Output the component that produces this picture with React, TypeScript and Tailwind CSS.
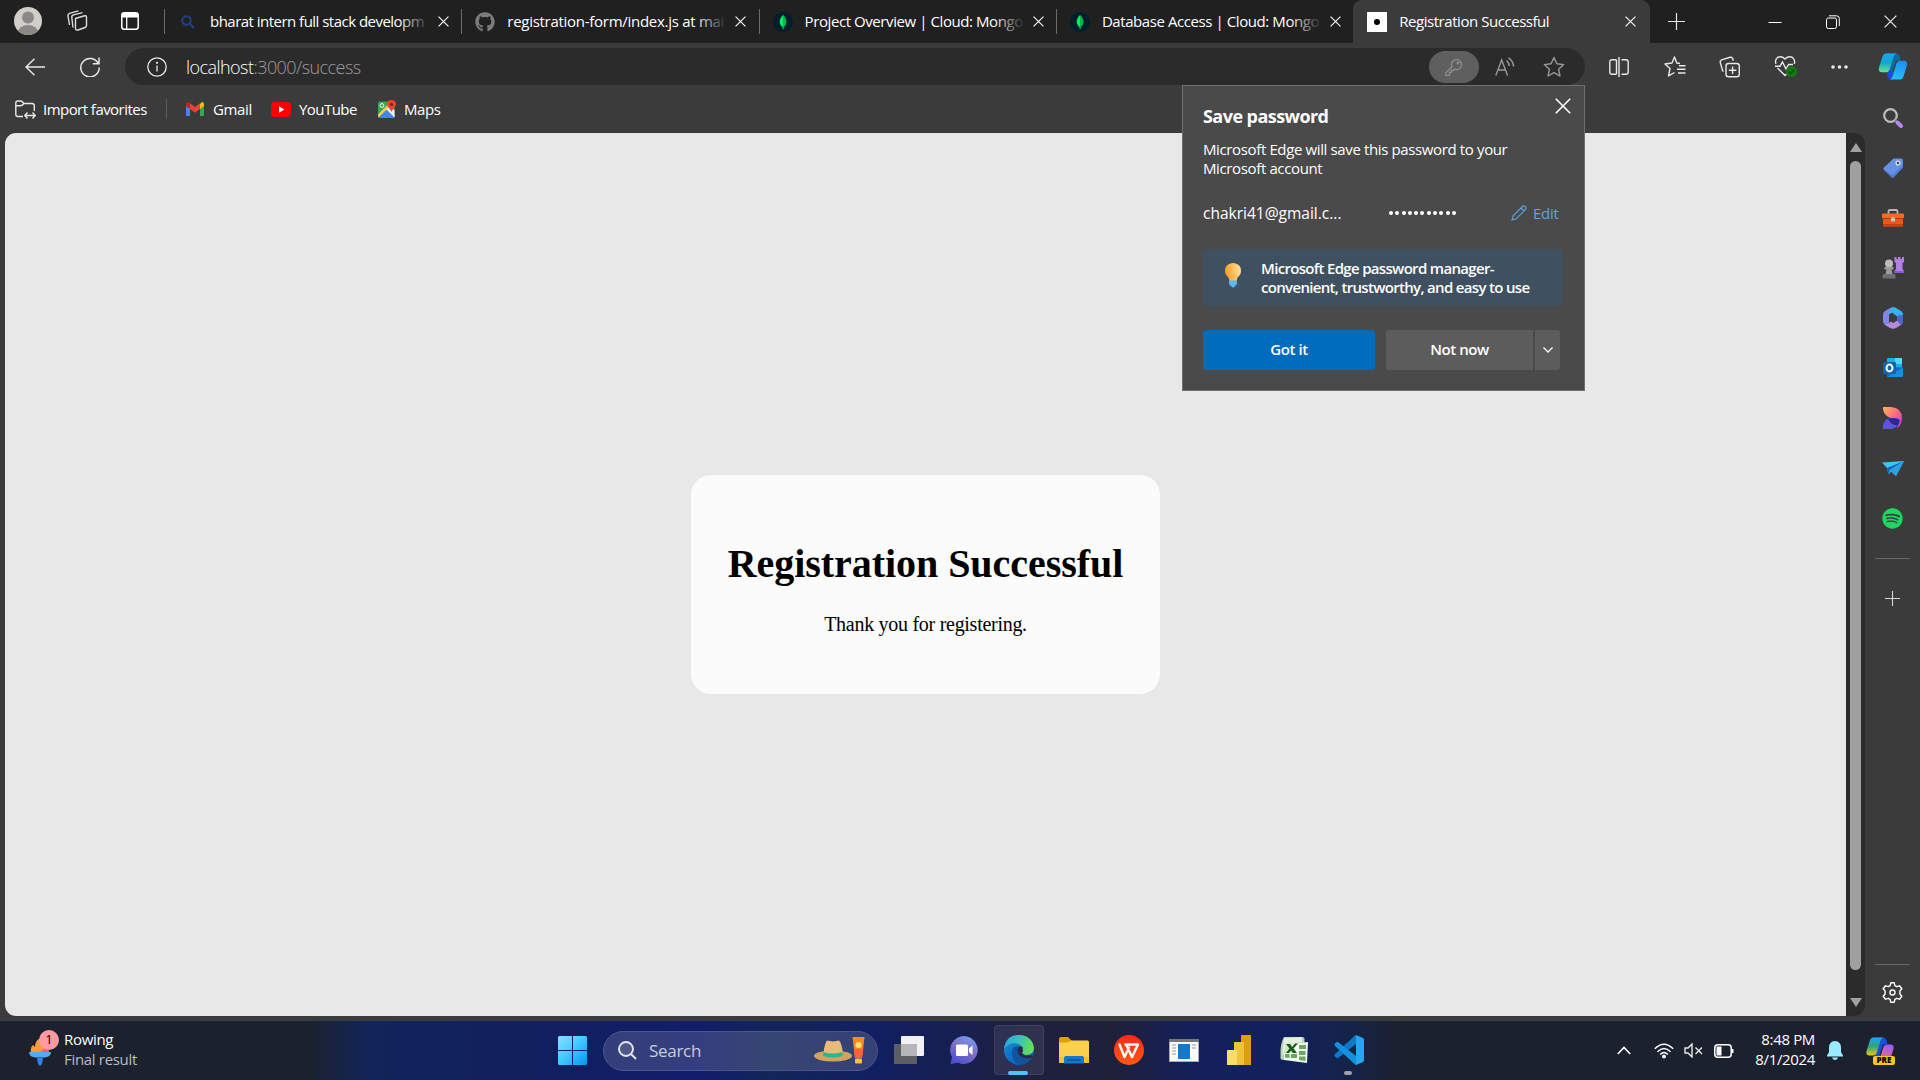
import React from "react";
import { FaGithub, FaSpotify } from "react-icons/fa";

type SvgProps = { className?: string };

const CloseX = ({ className = "" }: SvgProps) => (
  <svg className={className} viewBox="0 0 10 10" fill="none" stroke="currentColor">
    <path d="M0.5 0.5L9.5 9.5M9.5 0.5L0.5 9.5" />
  </svg>
);

const SearchBlue = () => (
  <svg className="h-[14px] w-[14px]" viewBox="0 0 14 14" fill="none" stroke="#1d4189" strokeWidth="2">
    <circle cx="5.5" cy="5.5" r="4.2" />
    <path d="M8.6 8.6L13 13" />
  </svg>
);

const Mongo = () => (
  <svg className="h-5 w-5" viewBox="0 0 20 20">
    <circle cx="10" cy="10" r="10" fill="#021e2b" />
    <path d="M10 3C12.4 5.400 13.300 7.500 13.300 9.800C13.300 12.600 11.500 14.400 10.500 15.200L10.300 17.200H9.700L9.500 15.200C8.500 14.400 6.700 12.600 6.700 9.800C6.700 7.500 7.600 5.400 10 3Z" fill="#00ed64" />
    <path d="M10 3C12.400 5.400 13.300 7.500 13.300 9.800C13.300 12.600 11.500 14.400 10.500 15.200L10.300 17.200H10Z" fill="#00b54c" />
  </svg>
);

const DotFavicon = () => (
  <div className="flex h-5 w-5 items-center justify-center bg-white">
    <div className="h-[6px] w-[6px] rounded-full bg-black" />
  </div>
);

const tabs = [
  { title: "bharat intern full stack developm", icon: <SearchBlue />, cls: "tracking-[-0.52px]" },
  { title: "registration-form/index.js at mai", icon: <FaGithub className="h-5 w-5 text-[#7c7c7c]" />, cls: "tracking-[-0.28px]" },
  { title: "Project Overview | Cloud: Mongo", icon: <Mongo />, cls: "tracking-[-0.42px]" },
  { title: "Database Access | Cloud: Mongo", icon: <Mongo />, cls: "tracking-[-0.42px]" },
];

const TabBar = () => (
  <div className="flex h-[43px] shrink-0 items-center bg-[#202020]">
    <div className="flex w-[164px] shrink-0 items-center pb-px">
      <svg className="ml-[14px] h-7 w-7" viewBox="0 0 28 28">
        <defs><clipPath id="avatar"><circle cx="14" cy="14" r="14" /></clipPath></defs>
        <g clipPath="url(#avatar)">
          <rect width="28" height="28" fill="#d0cec9" />
          <circle cx="14" cy="10.500" r="6" fill="#8b8885" />
          <ellipse cx="14" cy="25.500" rx="10" ry="7.500" fill="#8b8885" />
        </g>
      </svg>
      <svg className="ml-[24px] h-[22px] w-[22px] text-[#dcdcdc]" viewBox="0 0 22 22" fill="none" stroke="currentColor" strokeWidth="1.400">
        <path d="M9.500 8.500L18.500 5.800Q20.500 5.300 20.500 7.200V15.500Q20.500 17 19 17.500L12 20Q9.800 20.700 9.500 18.500Z" />
        <path d="M7 17.500L5.800 7.500Q5.500 5.500 7.500 4.900L16.500 2.600" />
        <path d="M3.500 15L2 6Q1.700 4 3.500 3.300L12.500 0.900" />
      </svg>
      <svg className="ml-[33px] h-[18px] w-[18px]" viewBox="0 0 18 18">
        <rect x="0.800" y="0.800" width="16.400" height="16.400" rx="2.500" fill="none" stroke="#fff" strokeWidth="1.500" />
        <path d="M1 5.500V3Q1 1 3 1H15Q17 1 17 3V5.500Z" fill="#fff" />
        <path d="M5.700 5V17" stroke="#fff" strokeWidth="1.300" />
      </svg>
    </div>
    {tabs.map((t) => (
      <div key={t.title} className="flex w-[297.300px] shrink-0 items-center">
        <div className="h-[25px] w-px bg-[#6c6c6c]" />
        <div className="ml-[11px] flex w-[24px] shrink-0 justify-center">{t.icon}</div>
        <div className="relative ml-[10px] w-[220px] shrink-0 pb-[2px]">
          <div className={`text-[15px] leading-[22px] whitespace-nowrap text-white ${t.cls}`}>{t.title}</div>
          <div className="absolute inset-y-0 right-0 w-[32px] bg-linear-to-r from-transparent to-[#202020]" />
        </div>
        <CloseX className="ml-[8px] h-[11px] w-[11px] shrink-0 text-white" />
      </div>
    ))}
    <div className="flex h-[43px] w-[297px] shrink-0 items-center rounded-t-[9px] bg-[#3b3b3b]">
      <div className="ml-[14px]"><DotFavicon /></div>
      <div className="ml-[12px] w-[226px] pb-[2px] text-[15px] leading-[22px] tracking-[-0.450px] whitespace-nowrap text-white">Registration Successful</div>
      <CloseX className="h-[11px] w-[11px] text-white" />
    </div>
    <svg className="ml-[18px] h-[17px] w-[17px]" viewBox="0 0 17 17" stroke="#e6e6e6" strokeWidth="1.200"><path d="M8.500 0V17M0 8.500H17" /></svg>
    <svg className="ml-[83px] h-3 w-[14px]" viewBox="0 0 14 12" stroke="#fff"><path d="M0.500 6.500H13.500" /></svg>
    <svg className="ml-[44px] h-[14px] w-[14px]" viewBox="0 0 14 14" fill="none" stroke="#fff">
      <rect x="0.500" y="3" width="10" height="10.500" rx="1.800" />
      <path d="M3 0.800H10.500Q13.300 0.800 13.300 3.500V11" />
    </svg>
    <CloseX className="ml-[44px] h-[13px] w-[13px] text-[#e4e4e4]" />
  </div>
);

const Copilot = ({ id, pink = false, className = "" }: { id: string; pink?: boolean; className?: string }) => (
  <svg className={className} viewBox="0 0 30 28">
    <defs>
      <linearGradient id={`${id}a`} x1="0" y1="0" x2="0" y2="1">
        <stop offset="0" stopColor="#1aa6f0" /><stop offset="0.500" stopColor={pink ? "#2fa37c" : "#12a8cf"} /><stop offset="1" stopColor={pink ? "#f3c80d" : "#6be28a"} />
      </linearGradient>
      <linearGradient id={`${id}b`} x1="0.700" y1="0" x2="0.300" y2="1">
        <stop offset="0" stopColor={pink ? "#9b5cf5" : "#1f8df2"} /><stop offset="1" stopColor={pink ? "#fb6d6c" : "#22c1fb"} />
      </linearGradient>
    </defs>
    <path d="M7 0.500H18Q21 0.500 22 3.500L23 8H18L14 21H9Z" fill={pink ? "#1b50dc" : "#0d6b9e"} />
    <path d="M10 18L16 20L13 27.500Q10 27.500 9 24Z" fill="#1c49e0" />
    <path d="M8 0.500H19Q16.500 1 15.500 4L11.500 17Q10.500 20 7 20H3.500Q-0.500 20 0.500 15L4 4Q5 0.500 8 0.500Z" fill={`url(#${id}a)`} />
    <path d="M22 27.500H11Q13.500 27 14.500 24L18.500 11Q19.500 8 23 8H26.500Q30.500 8 29.500 13L26 24Q25 27.500 22 27.500Z" fill={`url(#${id}b)`} />
  </svg>
);

const starPath = "M11 1.500L13.900 7.800L20.700 8.600L15.600 13.200L17 20L11 16.600L5 20L6.400 13.200L1.300 8.600L8.100 7.800Z";

const Toolbar = () => (
  <div className="flex h-[47px] shrink-0 items-center bg-[#3b3b3b] text-[#e8e8e8]">
    <svg className="ml-[25px] h-[18px] w-[20px]" viewBox="0 0 20 18" fill="none" stroke="currentColor" strokeWidth="1.400">
      <path d="M20 9H1M9.500 0.700L1 9L9.500 17.300" />
    </svg>
    <svg className="ml-[35px] h-[20px] w-[20px]" viewBox="0 0 20 20" fill="none" stroke="currentColor" strokeWidth="1.500">
      <path d="M18.200 6.500A9.200 9.200 0 1 0 19.200 10.500M19 0.500V6.700H12.800" />
    </svg>
    <div className="ml-[25px] flex h-[37px] w-[1460px] shrink-0 items-center rounded-full bg-[#2b2b2b]">
      <svg className="ml-[22px] h-5 w-5" viewBox="0 0 20 20" fill="none" stroke="currentColor" strokeWidth="1.300">
        <circle cx="10" cy="10" r="9.200" /><path d="M10 8.500V14.500" /><circle cx="10" cy="5.800" r="0.500" />
      </svg>
      <div className="ml-[19px] flex-1 text-[18px] leading-6 font-light tracking-[-0.550px] whitespace-nowrap text-[#9c9c9c]">
        <span className="text-white">localhost</span>:3000/success
      </div>
      <div className="flex h-[32px] w-[50px] items-center justify-center rounded-full bg-[#5f5f5f] text-[#8e8e8e]">
        <svg className="h-[18px] w-[18px]" viewBox="0 0 18 18" fill="none" stroke="currentColor" strokeWidth="1.300">
          <path d="M7 8.800A5 5 0 1 1 9.500 11.200L8 12.500H6.300V14.300H4.500V16.500L4 17.300H0.800V14.800Z" />
          <circle cx="13" cy="5" r="0.900" />
        </svg>
      </div>
      <svg className="ml-[16px] h-5 w-5 text-[#9a9a9a]" viewBox="0 0 20 20" fill="none" stroke="currentColor" strokeWidth="1.400">
        <path d="M0.800 18.500L6.700 3L12.600 18.500M2.800 13H10.700M11.500 3.500Q14 5.500 14.300 9M13.500 0.800Q18 3.500 18.600 9.500" />
      </svg>
      <svg className="mr-[20px] ml-[28px] h-[22px] w-[22px] text-[#9a9a9a]" viewBox="0 0 22 22" fill="none" stroke="currentColor" strokeWidth="1.400" strokeLinejoin="round">
        <path d={starPath} />
      </svg>
    </div>
    <svg className="ml-[24px] h-5 w-5 shrink-0" viewBox="0 0 20 20" fill="none" stroke="currentColor" strokeWidth="1.400">
      <path d="M7.500 2.700H3.200Q0.800 2.700 0.800 5V15Q0.800 17.300 3.200 17.300H7.500M7.500 2.700V17.300M12.500 2.700H16.800Q19.200 2.700 19.200 5V15Q19.200 17.300 16.800 17.300H12.500M10 0V20" />
    </svg>
    <svg className="ml-[35px] h-[21px] w-[22px] shrink-0" viewBox="0 0 22 21" fill="none" stroke="currentColor" strokeWidth="1.400" strokeLinejoin="round">
      <path d="M16 7.500L12.800 7L10.500 1L8 7L1 8L6 12.500L4.500 19.800L10.500 16.500M15 9.800H21.500M13 13.300H21.500M14 17H21.500" />
    </svg>
    <svg className="ml-[33px] h-[22px] w-[22px] shrink-0" viewBox="0 0 22 22" fill="none" stroke="currentColor" strokeWidth="1.400">
      <rect x="7" y="7.500" width="13.300" height="13.300" rx="2.500" />
      <path d="M13.600 10.500V18M9.900 14.200H17.400M4.500 15.500L3.500 14.500L1.300 6.500Q0.800 4.500 2.700 3.800L11 1.300Q13 0.800 13.700 2.500L14.300 4.700" />
    </svg>
    <svg className="ml-[33px] h-[23px] w-[24px] shrink-0" viewBox="0 0 24 23" fill="none" stroke="currentColor" strokeWidth="1.400">
      <path d="M2 9Q0.500 5 3.500 2.500Q7.500 0.500 11 4Q14.500 0.500 18.500 2.500Q21.500 5 20.300 9M3.500 13L11 20.500L12.500 19M1 11.200H6L8.500 7L12 14L14.500 9.500H19" />
      <circle cx="17.500" cy="16.500" r="5.600" fill="#107c10" stroke="none" />
      <path d="M14.800 16.500L16.800 18.500L20.300 14.800" stroke="#0a3b0a" strokeWidth="1.300" />
    </svg>
    <svg className="ml-[33px] h-1 w-[17px] shrink-0" viewBox="0 0 17 4" fill="currentColor"><circle cx="2" cy="2" r="1.800" /><circle cx="8.500" cy="2" r="1.800" /><circle cx="15" cy="2" r="1.800" /></svg>
    <Copilot id="cpt" className="ml-[30px] h-[27px] w-[30px] shrink-0" />
  </div>
);

const Favorites = () => (
  <div className="flex h-[43px] shrink-0 items-center bg-[#3b3b3b] pb-[5px] text-[15px] text-white">
    <svg className="ml-[15px] h-[19px] w-[21px]" viewBox="0 0 21 19" fill="none" stroke="#e8e8e8" strokeWidth="1.400">
      <path d="M8 16.500H3Q0.800 16.500 0.800 14.300V3Q0.800 1 3 1H6.500L9 3.500H17Q19.300 3.500 19.300 5.700V11M0.800 5.800H5.500Q7 5.800 9 3.500M12.500 12.500L9.800 15.500L12.500 18.500M17.500 12.500L20.200 15.500L17.500 18.500M10 15.500H20" />
    </svg>
    <span className="ml-[7px] w-[105px] tracking-[-0.540px] whitespace-nowrap">Import favorites</span>
    <div className="ml-[18px] h-5 w-px bg-[#5c5c5c]" />
    <svg className="ml-[19px] h-[14px] w-[18px]" viewBox="0 0 18 14">
      <path d="M0 2V12.800Q0 14 1.200 14H4V5Z" fill="#4285f4" />
      <path d="M18 2V12.800Q18 14 16.800 14H14V5Z" fill="#34a853" />
      <path d="M14 2V7L18 4V2Q18 0 16 0Z" fill="#fbbc04" />
      <path d="M4 7V1.200L9 5L14 1.200V7L9 10.800Z" fill="#ea4335" />
      <path d="M0 2Q0 0 2 0L4 1.200V7L0 4Z" fill="#c5221f" />
    </svg>
    <span className="ml-[9px] w-[38px] tracking-[-0.350px]">Gmail</span>
    <svg className="ml-[20px] h-[15px] w-[20px]" viewBox="0 0 20 15"><rect width="20" height="15" rx="4" fill="#f00" /><path d="M8 4.300L13.300 7.500L8 10.700Z" fill="#fff" /></svg>
    <span className="ml-[8px] w-[58px] tracking-[-0.550px]">YouTube</span>
    <svg className="ml-[21px] h-[18px] w-[18px]" viewBox="0 0 18 18">
      <rect y="1.500" width="16.500" height="16.500" rx="2" fill="#34a853" />
      <path d="M8.500 9.500L0.500 17.500H16V16.500Z" fill="#4285f4" />
      <path d="M9.500 8L16.500 15V17L16 18L8 9.500Z" fill="#e8eaed" />
      <path d="M0 14.500L10.500 4L12 6L0.500 17.500Z" fill="#fbd24a" />
      <path d="M9 10L16.500 17.500L14.500 18H2Z" fill="#4285f4" />
      <path d="M8.800 9.200L12 6.500L16.500 10V16.500Z" fill="#f1f3f4" />
      <circle cx="4" cy="5.500" r="1.900" fill="none" stroke="#fff" />
      <path d="M13.500 0Q18 0 18 4.300Q18 6.500 15.500 8.800Q14.200 10 13.500 12Q12.800 10 11.500 8.800Q9 6.500 9 4.300Q9 0 13.500 0Z" fill="#ea4335" />
      <circle cx="13.500" cy="4.300" r="1.600" fill="#8c1d18" />
    </svg>
    <span className="ml-[8px] tracking-[-0.400px]">Maps</span>
  </div>
);

const sidebarIcons: React.ReactNode[] = [
  <svg className="h-5 w-5" viewBox="0 0 20 20" fill="none"><circle cx="7.500" cy="7.500" r="6.300" stroke="#bdbdbd" strokeWidth="2.200" /><path d="M12 12L14 14" stroke="#888" strokeWidth="2" /><path d="M14.500 14.500L18 18" stroke="#b685ee" strokeWidth="4" strokeLinecap="round" /></svg>,
  <svg className="h-5 w-5" viewBox="0 0 20 20"><path d="M10.500 0.500H18Q20 0.500 20 2.500V9.500L10.500 19.300Q9.500 20 8.500 19.200L0.700 11.500Q0 10.500 0.800 9.700Z" fill="#6592e6" /><path d="M0.700 11.500L8.500 19.200Q9.500 20 10.500 19.300L20 9.500V7L9.500 17Z" fill="#4f7fd9" /><circle cx="15" cy="5" r="1.900" fill="#31456d" stroke="#e2e2e2" strokeWidth="1.300" /></svg>,
  <svg className="h-[18px] w-[22px]" viewBox="0 0 22 18"><path d="M6.500 5V2.500Q6.500 1 8 1H14Q15.500 1 15.500 2.500V5" fill="none" stroke="#b9b9b9" strokeWidth="1.800" /><rect x="1" y="7" width="20" height="10.500" rx="1" fill="#e8591c" /><rect y="4.500" width="22" height="5" rx="1" fill="#f36c21" /><path d="M1 9.500H21" stroke="#a83a0c" /><path d="M1 15H21V17.500H1Z" fill="#c9400f" /><circle cx="11" cy="10.500" r="2.200" fill="#c4c4c4" /></svg>,
  <svg className="h-[22px] w-[22px]" viewBox="0 0 22 22"><path d="M12.500 0H14.500V2H16V0H18.500V2H20V0H22V5L20.500 6V12L22 14V16H12.500V14L14 12V6L12.500 5Z" fill="#b47ee6" /><path d="M12.500 14H22V16H12.500Z" fill="#8f5ac4" /><circle cx="7" cy="6.500" r="4" fill="#bcbcbc" /><path d="M2.500 10H11.500V12.500H9.500L10.500 17H3.500L4.500 12.500H2.500Z" fill="#9c9c9c" /><path d="M0.500 18.500Q0.500 17 2 17H12Q13.500 17 13.500 18.500V21.500H0.500Z" fill="#6f6f6f" /></svg>,
  <svg className="h-[22px] w-5" viewBox="0 0 20 22"><path d="M7 1Q10-0.500 13 1L9 5.500L6 7.500V15L3.500 18.500L2 18Q0 16.800 0 14V8Q0 5.200 2 4Z" fill="#8187e8" /><path d="M9 0.500Q11 0 13 1L18 4Q20 5.200 20 8V13L14 9.500L9 5.500L5 7Z" fill="#35b5ef" /><path d="M20 12V14Q20 16.800 18 18L13 21Q10 22.500 7 21L2 18L8 14.500L10 16L14.500 13.500V9Z" fill="#b48ade" /><path d="M20 8V14Q20 16.800 18 18L14 13.500L14.500 8.500Z" fill="#4a66c9" /></svg>,
  <svg className="h-5 w-5" viewBox="0 0 20 20"><rect x="4" width="15" height="13" rx="1" fill="#28a8ea" /><rect x="12" width="7" height="6" fill="#50d9ff" /><path d="M4 9L20 9.500V18Q20 19 19 19H4Z" fill="#0a6fc2" /><path d="M4 19L20 9.500V18Q20 19 19 19Z" fill="#1490df" /><rect y="4" width="13" height="12" rx="1.200" fill="#0f64ad" /><ellipse cx="6.500" cy="10" rx="3" ry="3.400" fill="none" stroke="#fff" strokeWidth="2" /></svg>,
  <svg className="h-[22px] w-[19px]" viewBox="0 0 19 22"><defs><linearGradient id="dsA" x1="0" y1="0" x2="1" y2="1"><stop stopColor="#ffb45c" /><stop offset="0.500" stopColor="#fa6b82" /><stop offset="1" stopColor="#b52de0" /></linearGradient></defs><path d="M0 0H8Q19 1 19 11Q19 18 14 21.500L17 13L8 11Q1 9 0 2Z" fill="url(#dsA)" /><path d="M0 22V19Q1 11 9 11Q16 11 16.500 13Q16 21 8 22Z" fill="#5b55e0" /><path d="M5 12Q12 9.500 16.500 13Q16.500 16 14.500 18.500Q8 18 5 12Z" fill="#2a259c" /></svg>,
  <svg className="h-[15px] w-[22px]" viewBox="0 0 22 15"><path d="M0 1.500L22 0L14 15L9 10.500L6.500 13.500L5 7Z" fill="#41c3f3" /><path d="M5 7L22 0L8 9L6.500 13.500Z" fill="#1165b4" /><path d="M22 0L14 15L8 9.500Z" fill="#2ba0e6" /></svg>,
  <FaSpotify className="h-[21px] w-[21px] text-[#1ed760]" />,
];

const Sidebar = () => (
  <div className="flex w-[55px] shrink-0 flex-col items-center bg-[#3b3b3b] pt-[3px]">
    <div className="flex flex-col">
      {sidebarIcons.map((ic, i) => (
        <div key={i} className="flex h-[50px] w-[55px] items-center justify-center">{ic}</div>
      ))}
    </div>
    <div className="mt-[15px] h-px w-[35px] bg-[#686868]" />
    <svg className="mt-[32px] h-[15px] w-[15px]" viewBox="0 0 15 15" stroke="#d8d8d8" strokeWidth="1.100"><path d="M7.500 0V15M0 7.500H15" /></svg>
    <div className="mt-auto h-px w-[35px] bg-[#686868]" />
    <svg className="mt-[17px] mb-[17px] h-[21px] w-[21px]" viewBox="0 0 21 21" fill="none" stroke="#fff" strokeWidth="1.400" strokeLinejoin="round">
      <path d="M8.800 0.800H12.200L12.900 3.700L14.700 4.700L17.500 3.800L19.800 6.700L17.900 9V12L19.800 14.300L17.500 17.200L14.700 16.300L12.900 17.300L12.200 20.200H8.800L8.100 17.300L6.300 16.300L3.500 17.200L1.200 14.300L3.100 12V9L1.200 6.700L3.500 3.800L6.300 4.700L8.100 3.700Z" />
      <circle cx="10.500" cy="10.500" r="2.500" />
    </svg>
  </div>
);

const PasswordPopup = () => (
  <div className="absolute top-[85px] left-[1182px] flex h-[306px] w-[403px] flex-col border border-[#6e6e6e] bg-[#4a4a4a] pl-5 text-white">
    <div className="flex h-[40px] items-end justify-between">
      <h2 className="h-[20px] text-[18px] leading-[20px] font-bold tracking-[-0.550px]">Save password</h2>
      <CloseX className="mr-[13px] mb-[12px] h-4 w-4" />
    </div>
    <p className="mt-[14px] h-[38px] text-[15px] leading-[19px] tracking-[-0.370px] whitespace-nowrap">
      Microsoft Edge will save this password to your<br />Microsoft account
    </p>
    <div className="mt-[25px] flex h-5 items-center text-[15.500px]">
      <span className="w-[186px] pt-px whitespace-nowrap">chakri41@gmail.c...</span>
      <div className="flex w-[122px] gap-[2.300px]">
        {Array.from({ length: 11 }, (_, i) => <div key={i} className="h-1 w-1 rounded-full bg-white" />)}
      </div>
      <svg className="h-4 w-4 text-[#5ca5de]" viewBox="0 0 16 16" fill="none" stroke="currentColor" strokeWidth="1.100">
        <path d="M1 15L2.200 10.800L11.500 1.500Q13 0.300 14.400 1.600Q15.700 3 14.500 4.500L5.200 13.800ZM10 3L13 6" />
      </svg>
      <span className="ml-[6px] text-[15px] tracking-[-0.300px] text-[#5ca5de]">Edit</span>
    </div>
    <div className="mt-[26px] flex h-[57px] w-[360px] items-center rounded-[4px] bg-[#3f5160]">
      <svg className="mb-[5px] ml-[22px] h-[25px] w-4" viewBox="0 0 16 25">
        <defs><linearGradient id="bulb" x1="0" y1="0.500" x2="1" y2="0.300"><stop stopColor="#ff9a1f" /><stop offset="1" stopColor="#ffe3a0" /></linearGradient></defs>
        <path d="M8 0Q16 0.500 16 8Q16 11.500 12.500 14.500L11.500 18H4.500L3.500 14.500Q0 11.500 0 8Q0 0.500 8 0Z" fill="url(#bulb)" />
        <path d="M4 17.500H12V20.500Q11.500 22.500 10 23Q8 26 6 23Q4.500 22.500 4 20.500Z" fill="#5db7f0" />
      </svg>
      <p className="ml-5 text-[15px] leading-[19px] font-semibold tracking-[-0.680px] whitespace-nowrap">
        Microsoft Edge password manager-<br />convenient, trustworthy, and easy to use
      </p>
    </div>
    <div className="mt-[24px] flex h-10 text-[15px] font-semibold tracking-[-0.450px]">
      <button className="w-[172px] rounded-[4px] bg-[#006cbe] pb-px">Got it</button>
      <button className="ml-[11px] w-[147px] rounded-l-[3px] bg-[#5c5c5c] pb-px">Not now</button>
      <button className="ml-[2px] flex w-[25px] items-center justify-center rounded-r-[3px] bg-[#5c5c5c]">
        <svg className="h-[6px] w-[10px]" viewBox="0 0 10 6" fill="none" stroke="#fff" strokeWidth="1.300"><path d="M0.500 0.500L5 5L9.500 0.500" /></svg>
      </button>
    </div>
  </div>
);

const appIcons: React.ReactNode[] = [
  <svg className="h-7 w-[30px]" viewBox="0 0 30 28"><rect y="8" width="23" height="20" rx="1" fill="#5d5e63" /><rect x="7" width="23" height="20" rx="1" fill="#f1f1f3" /><path d="M7 8H23V20H7Z" fill="#b5b6ba" /></svg>,
  <svg className="h-7 w-7" viewBox="0 0 28 28"><defs><linearGradient id="chat" x1="0.800" y1="0" x2="0.300" y2="1"><stop stopColor="#6f9ff0" /><stop offset="0.500" stopColor="#7f6fc4" /><stop offset="1" stopColor="#4b4fd0" /></linearGradient></defs><path d="M14 0A14 14 0 1 1 8 26.800L0.500 28L2 21A14 14 0 0 1 14 0Z" fill="url(#chat)" /><rect x="6" y="8.500" width="12" height="11.500" rx="1.500" fill="#fff" /><path d="M19 12.500L22.500 9.500V19L19 16Z" fill="#fff" /></svg>,
  <svg className="h-[30px] w-[30px]" viewBox="0 0 30 30"><defs><linearGradient id="edgeT" x1="0" y1="0.300" x2="1" y2="0.500"><stop stopColor="#2aa8e0" /><stop offset="0.500" stopColor="#36c5b5" /><stop offset="1" stopColor="#6be04c" /></linearGradient><linearGradient id="edgeB" x1="0" y1="0" x2="0.500" y2="1"><stop stopColor="#1a8fdc" /><stop offset="1" stopColor="#0a62b8" /></linearGradient></defs><circle cx="15" cy="15" r="15" fill="url(#edgeB)" /><path d="M0.500 11Q3 0 15 0Q28 0.500 30 13Q29.500 20 22 20Q17 19.500 18.500 16.500Q19.500 10.500 13 8.500Q5 7 0 14Z" fill="url(#edgeT)" /><path d="M8 17Q8 11 13.500 11Q12 17 16 21Q20 24.500 28 22Q24 29.500 16 30Q8 27 8 17Z" fill="#10539e" /><path d="M18.500 12Q19.500 16 18 18Q20 21 26 20.500L28.500 20L28 22.500Q20 24.500 16 21Q12.500 17 13.500 12.500Q16 10.500 18.500 12Z" fill="#25294b" /></svg>,
  <svg className="h-[27px] w-[30px]" viewBox="0 0 30 27"><path d="M0 2Q0 0 2 0H9L12.500 3.500V10H0Z" fill="#dfa100" /><path d="M0 5.500H9L12 3.500H28.500Q30 3.500 30 5V26H0Z" fill="#fcd04b" /><path d="M0 20H30V26H0Z" fill="#f7c02c" /><path d="M5 26.500V21Q5 19 7 19H23Q25 19 25 21V26.500Z" fill="#1379d0" /><path d="M8.500 23H21.500" stroke="#0b4d91" strokeWidth="1.300" /></svg>,
  <svg className="h-[30px] w-[30px]" viewBox="0 0 30 30"><defs><linearGradient id="wps" x1="0" y1="0" x2="0" y2="1"><stop stopColor="#ff2617" /><stop offset="1" stopColor="#ff5a12" /></linearGradient></defs><circle cx="15" cy="15" r="15" fill="url(#wps)" /><path d="M5.500 9.500L10.500 22L15 12.500M12 9.500L18 22L24 9.500H11.500" fill="none" stroke="#fff" strokeWidth="2.400" strokeLinejoin="round" strokeLinecap="round" /></svg>,
  <svg className="h-[23px] w-[30px]" viewBox="0 0 30 23"><rect x="0.500" y="0.500" width="29" height="22" fill="#fafafa" stroke="#aaa" /><rect width="30" height="3" fill="#77787c" /><rect x="9" y="5" width="12" height="15" fill="#1478cb" /><path d="M3 6H7M3 9H7M3 12H7M3 15H7M23 6H27M23 9H27" stroke="#999" /></svg>,
  <svg className="h-[30px] w-6" viewBox="0 0 24 30"><rect x="14" width="10" height="30" rx="0.500" fill="#dd9f0b" /><rect x="7" y="7" width="10" height="23" rx="0.500" fill="#ecc33a" /><rect y="15" width="10" height="15" rx="0.500" fill="#f8dd68" /></svg>,
  <svg className="h-7 w-7" viewBox="0 0 28 28"><path d="M4 1H22Q25 1 24.500 4V14L3 24Q0 24 0.500 20Q0 7 4 1Z" fill="#b9d2b4" /><path d="M4 2L22 1V6L8 8L2 20Z" fill="#e6efe2" /><path d="M5 8L20 6L18 18L5 17Z" fill="#d5e6cf" /><path d="M12 8L28 6L27 27L4 24V17H12Z" fill="#f5f8f3" /><path d="M19 9H26V13H19ZM19 15H25.500V19H19ZM11 18H17V22H11ZM19 20.500H25.500V25L19 24ZM5 18H9.500V22L5 21.500Z" fill="#69a85f" /><path d="M6 8H10L12 11L15 7.500H18L13.500 12.500L17 17H13L11 14.500L9 17H6L9.500 12.500Z" fill="#175d1b" /></svg>,
  <svg className="h-[30px] w-[30px]" viewBox="0 0 30 30"><path d="M22 0L29 3Q30 3.500 30 5V25Q30 26.500 29 27L22 30Z" fill="#27a5f0" /><path d="M22 0V9L4 23Q3 23.500 2 22.500L0.500 21Q0 20 1 19L21 0.500Z" fill="#0a7ac9" /><path d="M22 30V21L4 7Q3 6.500 2 7.500L0.500 9Q0 10 1 11L21 29.500Z" fill="#1490df" /></svg>,
];

const Taskbar = () => (
  <div className="flex h-[60px] shrink-0 items-center border-t border-[#383c48] bg-[#1c212d]">
    <div className="flex h-full w-full items-center bg-[linear-gradient(90deg,#1c212d_0px,#1b222f_310px,#12245a_370px,#111f5e_540px,#111d6a_700px,#13265a_770px,#111f60_880px,#161f50_950px,#1e2040_1020px,#1f2038_1110px,#14205a_1190px,#11205c_1280px,#14234c_1340px,#1c2130_1400px,#1c212d_1920px)]">
      <div className="relative mb-[6px] ml-[29px] h-[36px] w-[31px] shrink-0">
        <svg className="absolute top-[8px] left-0 h-[28px] w-[22px]" viewBox="0 0 22 28"><path d="M2 16Q1 9 4 7L6 9Q6 2 12 0Q20 6 20 16Z" fill="#fb9a36" /><path d="M8 16Q12 14 18 8L20 16Z" fill="#f55c6c" /><path d="M0 14H22Q22 19 15 19.500H7Q0 19 0 14Z" fill="#4eaef5" /><path d="M8 20H14L13 26Q11 29 9 26Z" fill="#2f80ee" /></svg>
        <div className="absolute top-0 left-[10px] flex h-5 w-5 items-center justify-center rounded-full bg-[#ff99a4] text-[13px] text-black">1</div>
      </div>
      <div className="mb-[4px] ml-[4px] w-[200px] text-[15px] leading-5 tracking-[-0.320px]">
        <div className="text-white">Rowing</div>
        <div className="text-[#b9bcc3]">Final result</div>
      </div>
      <svg className="ml-[294px] h-[29px] w-[29px] shrink-0" viewBox="0 0 29 29">
        <defs><linearGradient id="win" x1="0" y1="0" x2="1" y2="1"><stop stopColor="#88e0ff" /><stop offset="0.450" stopColor="#46cbff" /><stop offset="1" stopColor="#0a93f7" /></linearGradient></defs>
        <path d="M1 0H14V14H0V1ZM15 0H28L29 1V14H15ZM0 15H14V29H1L0 28ZM15 15H29V28L28 29H15Z" fill="url(#win)" />
      </svg>
      <div className="ml-[16px] flex h-10 w-[275px] shrink-0 items-center rounded-full border border-[#4b568a] bg-white/15">
        <svg className="ml-[14px] h-[19px] w-[19px]" viewBox="0 0 19 19" fill="none" stroke="#e4e6ee" strokeWidth="1.900"><circle cx="8" cy="8" r="7" fill="#ffffff22" /><path d="M13 13L18 18" /></svg>
        <span className="ml-[12px] w-[165px] text-[17px] tracking-[-0.300px] text-[#c9cddc]">Search</span>
        <svg className="h-[22px] w-[38px]" viewBox="0 0 38 22"><ellipse cx="19" cy="16" rx="19" ry="5.500" fill="#d6a35c" /><path d="M9 15Q11 2 13 0.500L19 1.500L25 0.500Q28 3 29 15Q19 19 9 15Z" fill="#e7bb7c" /><path d="M9.300 12Q19 15 28.700 12V16Q19 19 9 16Z" fill="#2eb58c" /></svg>
        <svg className="h-[27px] w-[13px]" viewBox="0 0 13 27"><path d="M0.500 0H12.500L10 21H3Z" fill="#f98a1e" /><path d="M2 12H11.500L10 21H3Z" fill="#f4633a" /><circle cx="6.500" cy="8" r="3" fill="#ffe27a" /><rect x="3" y="21.500" width="7" height="5" rx="1" fill="#f3c04a" /></svg>
      </div>
      <div className="ml-[3px] flex h-full">
        {appIcons.map((ic, i) => (
          <div key={i} className="relative flex w-[55px] items-center justify-center pb-px">
            {i === 2 && <div className="absolute inset-x-[2.500px] top-[4px] h-[50px] rounded-[4px] border border-white/8 bg-white/8" />}
            <div className="relative">{ic}</div>
            {i === 2 && <div className="absolute bottom-[5px] left-[17px] h-1 w-5 rounded-full bg-[#4cc2ff]" />}
            {i === 8 && <div className="absolute bottom-[5px] left-[23px] h-1 w-2 rounded-full bg-[#9ea1ab]" />}
          </div>
        ))}
      </div>
      <svg className="ml-[241px] h-[9px] w-[14px] shrink-0" viewBox="0 0 14 9" fill="none" stroke="#fff" strokeWidth="1.600"><path d="M0.800 8L7 1.500L13.200 8" /></svg>
      <svg className="ml-[23px] h-[16px] w-[20px] shrink-0" viewBox="0 0 20 16" fill="none" stroke="#fff" strokeWidth="1.500"><path d="M0.800 5.800Q10-3.500 19.200 5.800M3.500 8.800Q10 2 16.500 8.800M6.200 11.600Q10 7.500 13.800 11.600" /><circle cx="10" cy="13.500" r="1.900" fill="#fff" stroke="none" /></svg>
      <svg className="ml-[10px] h-[15px] w-[19px] shrink-0" viewBox="0 0 19 15" fill="none" stroke="#e8e8e8" strokeWidth="1.400"><path d="M1 5H4L8 1V14L4 10H1ZM11.500 4.500L18 11M18 4.500L11.500 11" /></svg>
      <svg className="ml-[11px] h-[14px] w-[20px] shrink-0" viewBox="0 0 20 14" fill="none" stroke="#fff" strokeWidth="1.500"><rect x="0.800" y="0.800" width="16.400" height="12.400" rx="3" /><rect x="2.500" y="2.500" width="5" height="9" fill="#fff" stroke="none" /><path d="M18.500 5V9" strokeWidth="2" /></svg>
      <div className="mb-[4px] ml-[17px] w-[64px] shrink-0 text-right text-[15px] leading-5 tracking-[-0.350px] whitespace-nowrap text-white">
        <div>8:48 PM</div>
        <div>8/1/2024</div>
      </div>
      <svg className="ml-[12px] h-[19px] w-4 shrink-0" viewBox="0 0 16 19" fill="#99ebff"><path d="M8 0Q14 0.500 14 6.500V11L16 14.500V15.500H0V14.500L2 11V6.500Q2 0.500 8 0ZM5 16.500H11Q10 19 8 19Q6 19 5 16.500Z" /></svg>
      <div className="relative ml-[23px] h-7 w-[29px] shrink-0">
        <Copilot id="cpb" pink className="h-[26px] w-[28px]" />
        <div className="absolute right-0 bottom-0 flex h-[9px] w-[22px] items-center justify-center rounded-[2px] bg-[#fcc80a] text-[8px] leading-none font-extrabold text-black">PRE</div>
      </div>
    </div>
  </div>
);

export default function App() {
  return (
    <div className="relative flex h-[1080px] w-[1920px] flex-col overflow-hidden bg-[#3b3b3b] font-['Open_Sans','Noto_Sans',sans-serif]">
      <TabBar />
      <Toolbar />
      <div className="flex min-h-0 flex-1">
        <div className="flex w-[1865px] shrink-0 flex-col">
          <Favorites />
          <div className="ml-[5px] flex flex-1 overflow-hidden rounded-[11px] bg-[#2b2b2b]">
            <main className="flex w-[1841px] items-center justify-center bg-[#e8e8e8] pt-[20px]">
              <div className="flex h-[219px] w-[469px] flex-col items-center rounded-[20px] bg-[#fbfbfb] font-['Liberation_Serif',serif] text-black">
                <h1 className="mt-[66px] text-[40px] leading-[46px] font-bold tracking-[-0.050px] whitespace-nowrap">Registration Successful</h1>
                <p className="mt-[26px] text-[20px] leading-[23px] tracking-[-0.280px] whitespace-nowrap">Thank you for registering.</p>
              </div>
            </main>
            <div className="flex w-[19px] flex-col items-center">
              <svg className="mt-[10px] h-[9px] w-3" viewBox="0 0 12 9" fill="#a0a0a0"><path d="M6 0L12 9H0Z" /></svg>
              <div className="my-[9px] w-[11px] flex-1 rounded-full bg-[#a0a0a0]" />
              <svg className="mt-[19px] mb-[9px] h-[9px] w-3" viewBox="0 0 12 9" fill="#a0a0a0"><path d="M0 0H12L6 9Z" /></svg>
            </div>
          </div>
          <div className="h-[4px]" />
        </div>
        <Sidebar />
      </div>
      <Taskbar />
      <PasswordPopup />
    </div>
  );
}
